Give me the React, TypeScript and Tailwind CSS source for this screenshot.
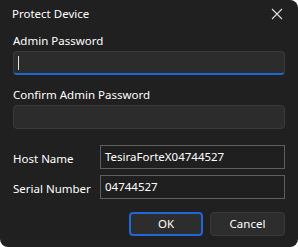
import React from "react";

export default function App() {
  const font = { fontFamily: '"Noto Sans", "Open Sans", sans-serif' };
  return (
    <div className="w-[298px] h-[247px] bg-white" style={font}>
      <div className="w-[298px] h-[247px] bg-[#202020] rounded-tr-[8px] rounded-b-[8px] flex flex-col text-[#ffffff] text-[11.5px] leading-none">
        <div className="h-[28px] flex items-center justify-between pl-[12px] pr-[15px]">
          <span>Protect Device</span>
          <svg width="12" height="12" viewBox="0 0 12 12">
            <path d="M1 1L11 11M11 1L1 11" stroke="#e0e0e0" strokeWidth="1.1" />
          </svg>
        </div>
        <div className="px-[13px] flex flex-col">
          <div className="mt-[6px] h-[14px] flex items-center">Admin Password</div>
          <div className="mt-[3px] h-[24px] bg-[#2c2c2c] border border-[#3a3a3a] border-b-2 border-b-[#1f66d6] rounded-[4px] flex items-center pl-[4px]">
            <div className="w-[1px] h-[14px] bg-[#e0e0e0]" />
          </div>
          <div className="mt-[13px] h-[14px] flex items-center">Confirm Admin Password</div>
          <div className="mt-[3px] h-[24px] bg-[#2c2c2c] border border-[#3a3a3a] rounded-[4px]" />
          <div className="mt-[16px] flex items-center">
            <span className="w-[87px] pt-[4px]">Host Name</span>
            <div className="flex-1 h-[24px] border border-[#5e5e5e] bg-[#1f1f1f] flex items-center pl-[4px]">TesiraForteX04744527</div>
          </div>
          <div className="mt-[6px] flex items-center">
            <span className="w-[87px] pt-[4px]">Serial Number</span>
            <div className="flex-1 h-[24px] border border-[#5e5e5e] bg-[#1f1f1f] flex items-center pl-[4px]">04744527</div>
          </div>
          <div className="mt-[13px] flex justify-end gap-[7px]">
            <div className="w-[74px] h-[24px] rounded-[4px] border-2 border-[#1f66d6] bg-[#2d2d2d] flex items-center justify-center">OK</div>
            <div className="w-[75px] h-[24px] rounded-[4px] border border-[#3a3a3a] bg-[#2d2d2d] flex items-center justify-center">Cancel</div>
          </div>
        </div>
      </div>
    </div>
  );
}
